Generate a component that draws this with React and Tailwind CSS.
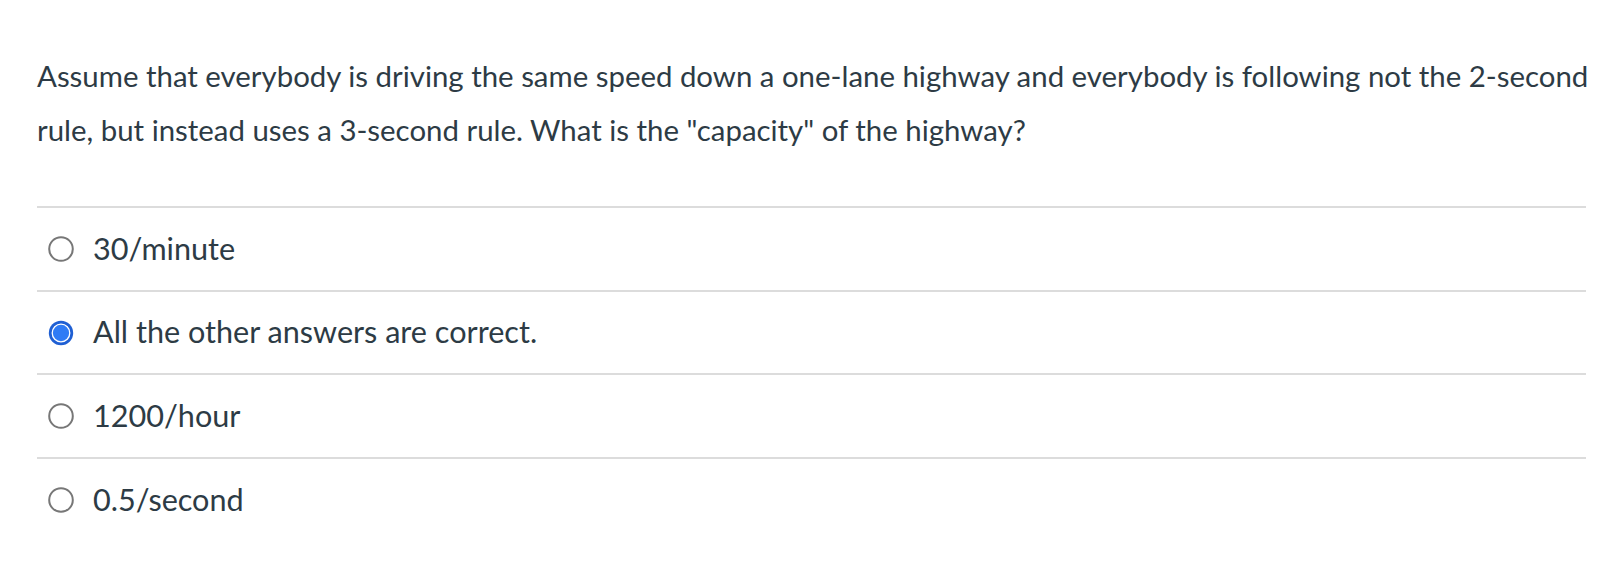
import React from "react";

function Radio({ checked }) {
  if (checked) {
    return (
      <svg width="28" height="28" viewBox="0 0 28 28" className="shrink-0">
        <path d="M4.5 11 A10.5 10.5 0 0 1 11 4.3" fill="none" stroke="#b9d3fb" strokeWidth="1.2" />
        <circle cx="14" cy="14" r="12.2" fill="#1f5fd3" />
        <circle cx="14" cy="14" r="8.8" fill="#2f7bf5" stroke="#ffffff" strokeWidth="1.3" />
      </svg>
    );
  }
  return (
    <svg width="28" height="28" viewBox="0 0 28 28" className="shrink-0">
      <circle cx="14" cy="14" r="11.8" fill="#ffffff" stroke="#777777" strokeWidth="2" />
    </svg>
  );
}

const answers = [
  { text: "30/minute", checked: false, h: "h-[84px]" },
  { text: "All the other answers are correct.", checked: true, h: "h-[83px]" },
  { text: "1200/hour", checked: false, h: "h-[84px]" },
  { text: "0.5/second", checked: false, h: "h-[84px]" },
];

export default function App() {
  return (
    <div className="w-[1624px] h-[564px] bg-white overflow-hidden" style={{ fontFamily: "Lato, 'Liberation Sans', sans-serif" }}>
      <div className="ml-[37px] w-[1549px] pt-[49px]">
        <p className="w-[1580px] whitespace-nowrap text-[29.4px] leading-[54px] text-[#2d3b45]">
          Assume that everybody is driving the same speed down a one-lane highway and everybody is following not the 2-second
          <br />
          rule, but instead uses a 3-second rule. What is the "capacity" of the highway?
        </p>
        <div className="mt-[49px]">
          {answers.map((a, i) => (
            <div key={i} className={`border-t-2 border-[#dcdcdc] ${a.h} flex items-center`}>
              <div className="ml-[10px] flex items-center">
                <Radio checked={a.checked} />
              </div>
              <span className="ml-[18px] text-[30.6px] text-[#2d3b45] leading-none">{a.text}</span>
            </div>
          ))}
        </div>
      </div>
    </div>
  );
}
